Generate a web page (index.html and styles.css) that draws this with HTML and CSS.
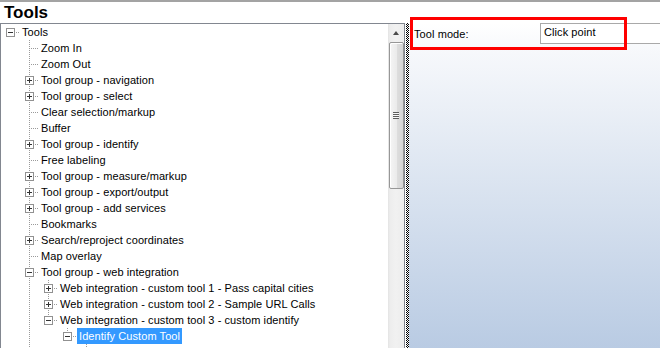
FILE: index.html
```html
<!DOCTYPE html>
<html>
<head>
<meta charset="utf-8">
<link rel="stylesheet" href="styles.css">
</head>
<body>
<div class="app">
  <div class="title">Tools</div>
  <div class="main">
    <div class="tree-panel">
      <div class="tree">
        <div class="row"><span class="c root"><span class="exp minus"></span></span><span class="lbl">Tools</span></div>
        <div class="row"><span class="c"></span><span class="c tee"></span><span class="lbl">Zoom In</span></div>
        <div class="row"><span class="c"></span><span class="c tee"></span><span class="lbl">Zoom Out</span></div>
        <div class="row"><span class="c"></span><span class="c tee"><span class="exp plus"></span></span><span class="lbl">Tool group - navigation</span></div>
        <div class="row"><span class="c"></span><span class="c tee"><span class="exp plus"></span></span><span class="lbl">Tool group - select</span></div>
        <div class="row"><span class="c"></span><span class="c tee"></span><span class="lbl">Clear selection/markup</span></div>
        <div class="row"><span class="c"></span><span class="c tee"></span><span class="lbl">Buffer</span></div>
        <div class="row"><span class="c"></span><span class="c tee"><span class="exp plus"></span></span><span class="lbl">Tool group - identify</span></div>
        <div class="row"><span class="c"></span><span class="c tee"></span><span class="lbl">Free labeling</span></div>
        <div class="row"><span class="c"></span><span class="c tee"><span class="exp plus"></span></span><span class="lbl">Tool group - measure/markup</span></div>
        <div class="row"><span class="c"></span><span class="c tee"><span class="exp plus"></span></span><span class="lbl">Tool group - export/output</span></div>
        <div class="row"><span class="c"></span><span class="c tee"><span class="exp plus"></span></span><span class="lbl">Tool group - add services</span></div>
        <div class="row"><span class="c"></span><span class="c tee"></span><span class="lbl">Bookmarks</span></div>
        <div class="row"><span class="c"></span><span class="c tee"><span class="exp plus"></span></span><span class="lbl">Search/reproject coordinates</span></div>
        <div class="row"><span class="c"></span><span class="c tee"></span><span class="lbl">Map overlay</span></div>
        <div class="row"><span class="c"></span><span class="c tee"><span class="exp minus"></span></span><span class="lbl">Tool group - web integration</span></div>
        <div class="row"><span class="c"></span><span class="c pipe"></span><span class="c tee"><span class="exp plus"></span></span><span class="lbl">Web integration - custom tool 1 - Pass capital cities</span></div>
        <div class="row"><span class="c"></span><span class="c pipe"></span><span class="c tee"><span class="exp plus"></span></span><span class="lbl">Web integration - custom tool 2 - Sample URL Calls</span></div>
        <div class="row"><span class="c"></span><span class="c pipe"></span><span class="c end"><span class="exp minus"></span></span><span class="lbl">Web integration - custom tool 3 - custom identify</span></div>
        <div class="row"><span class="c"></span><span class="c pipe"></span><span class="c"></span><span class="c end"><span class="exp minus"></span></span><span class="lbl selected">Identify Custom Tool</span></div>
        <div class="row"><span class="c"></span><span class="c pipe"></span><span class="c"></span><span class="c"></span><span class="c tee"></span><span class="lbl">Sample search and identify tool</span></div>
      </div>
      <div class="vscroll">
        <div class="arrow-btn"><span class="tri"></span></div>
        <div class="thumb"><span class="grip"></span></div>
      </div>
    </div>
    <div class="splitter"></div>
    <div class="props">
      <div class="prop-row">
        <span class="prop-label">Tool mode:</span>
        <span class="prop-value">Click point</span>
      </div>
    </div>
  </div>
  <div class="callout"></div>
</div>
</body>
</html>
```
FILE: styles.css
```css
html, body {
  margin: 0;
  padding: 0;
  background: #fff;
  overflow: hidden;
}
.app {
  position: relative;
  width: 660px;
  height: 348px;
  overflow: hidden;
  font-family: "Liberation Sans", Arial, sans-serif;
  font-size: 11px;
  letter-spacing: 0.08px;
  color: #000;
  display: flex;
  flex-direction: column;
}
.title {
  border-top: 2px solid #a3a3a3;
  height: 21px;
  line-height: 21px;
  padding-left: 4px;
  font-size: 17px;
  font-weight: bold;
  letter-spacing: 0;
  flex: none;
}
.main {
  flex: 1;
  display: flex;
  min-height: 0;
}
.tree-panel {
  width: 403px;
  flex: none;
  border: 1px solid #828790;
  border-bottom: none;
  display: flex;
  background: #fff;
}
.tree {
  flex: 1;
  overflow: hidden;
  display: flex;
  flex-direction: column;
}
.row {
  height: 16px;
  display: flex;
  align-items: center;
  white-space: nowrap;
  flex: none;
}
.c {
  width: 19px;
  height: 16px;
  flex: none;
  display: flex;
  align-items: center;
  background-repeat: no-repeat;
}
.pipe {
  background-image: repeating-linear-gradient(to bottom, #9a9a9a 0 1px, transparent 1px 2px);
  background-size: 1px 16px;
  background-position: 9px 0;
}
.tee {
  background-image:
    repeating-linear-gradient(to bottom, #9a9a9a 0 1px, transparent 1px 2px),
    repeating-linear-gradient(to right, #9a9a9a 0 1px, transparent 1px 2px);
  background-size: 1px 16px, 9px 1px;
  background-position: 9px 0, 11px 8px;
}
.end {
  background-image:
    repeating-linear-gradient(to bottom, #9a9a9a 0 1px, transparent 1px 2px),
    repeating-linear-gradient(to right, #9a9a9a 0 1px, transparent 1px 2px);
  background-size: 1px 8px, 9px 1px;
  background-position: 9px 0, 11px 8px;
}
.root {
  background-image: repeating-linear-gradient(to right, #9a9a9a 0 1px, transparent 1px 2px);
  background-size: 7px 1px;
  background-position: 13px 8px;
}
.exp {
  width: 7px;
  height: 7px;
  margin-left: 5px;
  margin-top: 1px;
  border: 1px solid #919191;
  background-color: #fff;
  background-repeat: no-repeat;
  box-sizing: content-box;
}
.minus {
  background-image: linear-gradient(#333, #333);
  background-size: 5px 1px;
  background-position: 1px 3px;
}
.plus {
  background-image: linear-gradient(#333, #333), linear-gradient(#333, #333);
  background-size: 5px 1px, 1px 5px;
  background-position: 1px 3px, 3px 1px;
}
.lbl {
  padding: 0 2px;
  line-height: 16px;
  height: 16px;
}
.selected {
  background: #3399ff;
  color: #fff;
}
.vscroll {
  width: 16px;
  flex: none;
  display: flex;
  flex-direction: column;
  align-items: center;
  background: linear-gradient(to right, #e3e3e3 0, #ededed 2px, #f1f1f1 50%, #ececec 100%);
}
.arrow-btn {
  height: 17px;
  width: 16px;
  display: flex;
  align-items: center;
  justify-content: center;
  flex: none;
}
.tri {
  width: 0;
  height: 0;
  border-left: 3px solid transparent;
  border-right: 3px solid transparent;
  border-bottom: 4px solid #4a4a4a;
  margin-top: 1px;
}
.thumb {
  margin-top: 1px;
  width: 13px;
  height: 145px;
  border: 1px solid #979797;
  border-radius: 2px;
  background: linear-gradient(to right, #f5f5f5, #ebebeb 50%, #dedede 51%, #d5d5d5);
  box-shadow: inset 1px 1px 0 #fff;
  display: flex;
  align-items: center;
  justify-content: center;
  flex: none;
}
.grip {
  width: 6px;
  height: 7px;
  background: repeating-linear-gradient(to bottom, #5e5e5e 0 1px, #f8f8f8 1px 2px);
}
.splitter {
  width: 3px;
  margin-left: 1px;
  flex: none;
  background: repeating-conic-gradient(#000 0 25%, #fff 0 50%) 0 0 / 2px 2px;
}
.props {
  flex: 1;
  background: linear-gradient(to bottom, #ffffff 0, #f6f8fb 30px, #b9cbe3 325px);
}
.prop-row {
  display: flex;
  height: 21px;
}
.prop-label {
  width: 126px;
  padding-left: 5px;
  line-height: 22px;
  flex: none;
}
.prop-value {
  flex: 1;
  border: 1px solid #a9a9a9;
  border-right: none;
  background: #fff;
  padding-left: 3px;
  line-height: 17px;
  height: 19px;
}
.callout {
  position: absolute;
  left: 410px;
  top: 17px;
  width: 217px;
  height: 33px;
  box-sizing: border-box;
  border: 3px solid #ff0000;
}
```
